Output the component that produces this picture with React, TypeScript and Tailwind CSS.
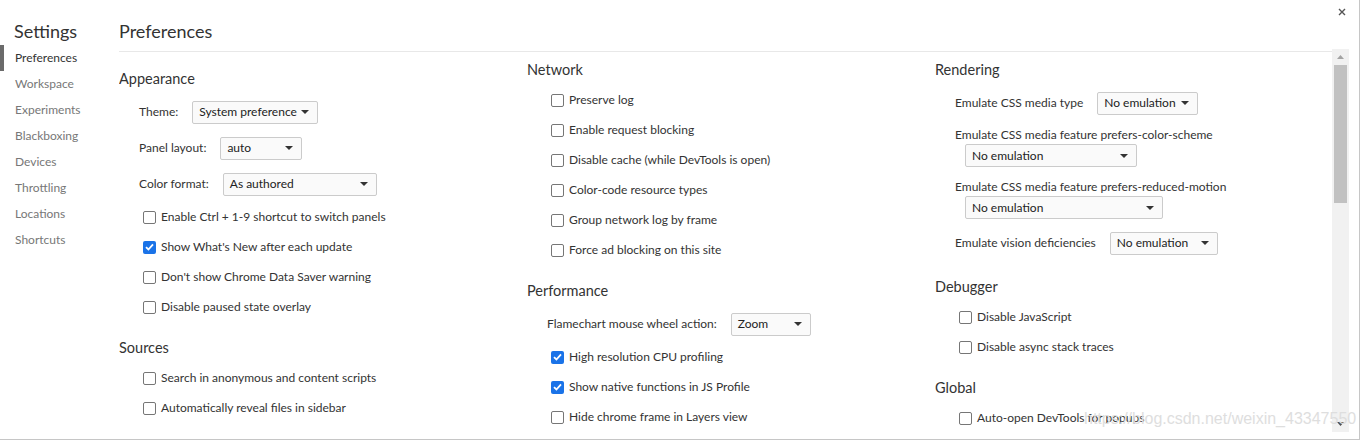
import React from "react";

type Row =
  | { kind: "check"; label: string; checked?: boolean }
  | { kind: "select"; label: string; value: string; width: string }
  | { kind: "stack"; label: string; value: string; width: string };

type Section = { title: string; rows: Row[] };

const columns: { pad: string; sections: Section[] }[] = [
  {
    pad: "pt-[18px]",
    sections: [
      {
        title: "Appearance",
        rows: [
          { kind: "select", label: "Theme:", value: "System preference", width: "w-[126px]" },
          { kind: "select", label: "Panel layout:", value: "auto", width: "w-[82px]" },
          { kind: "select", label: "Color format:", value: "As authored", width: "w-[154px]" },
          { kind: "check", label: "Enable Ctrl + 1-9 shortcut to switch panels" },
          { kind: "check", label: "Show What's New after each update", checked: true },
          { kind: "check", label: "Don't show Chrome Data Saver warning" },
          { kind: "check", label: "Disable paused state overlay" },
        ],
      },
      {
        title: "Sources",
        rows: [
          { kind: "check", label: "Search in anonymous and content scripts" },
          { kind: "check", label: "Automatically reveal files in sidebar" },
        ],
      },
    ],
  },
  {
    pad: "pt-[9px]",
    sections: [
      {
        title: "Network",
        rows: [
          { kind: "check", label: "Preserve log" },
          { kind: "check", label: "Enable request blocking" },
          { kind: "check", label: "Disable cache (while DevTools is open)" },
          { kind: "check", label: "Color-code resource types" },
          { kind: "check", label: "Group network log by frame" },
          { kind: "check", label: "Force ad blocking on this site" },
        ],
      },
      {
        title: "Performance",
        rows: [
          { kind: "select", label: "Flamechart mouse wheel action:", value: "Zoom", width: "w-[80px]" },
          { kind: "check", label: "High resolution CPU profiling", checked: true },
          { kind: "check", label: "Show native functions in JS Profile", checked: true },
          { kind: "check", label: "Hide chrome frame in Layers view" },
        ],
      },
    ],
  },
  {
    pad: "pt-[9px]",
    sections: [
      {
        title: "Rendering",
        rows: [
          { kind: "select", label: "Emulate CSS media type", value: "No emulation", width: "w-[101px]" },
          { kind: "stack", label: "Emulate CSS media feature prefers-color-scheme", value: "No emulation", width: "w-[172px]" },
          { kind: "stack", label: "Emulate CSS media feature prefers-reduced-motion", value: "No emulation", width: "w-[198px]" },
          { kind: "select", label: "Emulate vision deficiencies", value: "No emulation", width: "w-[108px]" },
        ],
      },
      {
        title: "Debugger",
        rows: [
          { kind: "check", label: "Disable JavaScript" },
          { kind: "check", label: "Disable async stack traces" },
        ],
      },
      {
        title: "Global",
        rows: [{ kind: "check", label: "Auto-open DevTools for popups" }],
      },
    ],
  },
];

const nav = ["Preferences", "Workspace", "Experiments", "Blackboxing", "Devices", "Throttling", "Locations", "Shortcuts"];

function Caret() {
  return (
    <svg width="8" height="4" viewBox="0 0 8 4" className="shrink-0">
      <path d="M0 0h8L4 4z" fill="#333" />
    </svg>
  );
}

function Select({ value, width }: { value: string; width: string }) {
  return (
    <div
      className={`${width} h-[23px] flex items-center justify-between pl-[6px] pr-[8px] border border-[#cbcbcb] rounded-[2px] bg-[#fafafa] text-[#222]`}
    >
      <span>{value}</span>
      <Caret />
    </div>
  );
}

function Checkbox({ checked }: { checked?: boolean }) {
  if (checked) {
    return (
      <div className="w-[13px] h-[13px] rounded-[2px] bg-[#1a73e8] flex items-center justify-center shrink-0">
        <svg width="9" height="8" viewBox="0 0 9 8">
          <path d="M1 4.2 3.4 6.5 8 1.3" fill="none" stroke="#fff" strokeWidth="1.8" />
        </svg>
      </div>
    );
  }
  return <div className="w-[13px] h-[13px] rounded-[2px] border border-[#767676] bg-white shrink-0" />;
}

function SettingRow({ row }: { row: Row }) {
  if (row.kind === "check") {
    return (
      <div className="h-[30px] flex items-center pl-[24px] gap-[5px]">
        <Checkbox checked={row.checked} />
        <span>{row.label}</span>
      </div>
    );
  }
  if (row.kind === "select") {
    return (
      <div className="h-[36px] flex items-center pl-[20px] gap-[14px]">
        <span>{row.label}</span>
        <Select value={row.value} width={row.width} />
      </div>
    );
  }
  return (
    <div className="h-[52px] flex flex-col pl-[20px] pt-[5px]">
      <span className="leading-[18px]">{row.label}</span>
      <div className="pl-[10px]">
        <Select value={row.value} width={row.width} />
      </div>
    </div>
  );
}

export default function App() {
  return (
    <div className="w-full h-[441px] bg-white overflow-hidden relative font-[Lato,'Liberation_Sans',sans-serif] text-[12px] text-[#333]">
      <div className="w-[1360px] h-[440px] flex border-r border-b border-[#c6c6c6] bg-white">
        {/* sidebar */}
        <div className="w-[119px] shrink-0 flex flex-col">
          <div className="h-[45px] pl-[14px] pt-[19px] text-[18px] leading-[24px] text-[#333]">Settings</div>
          {nav.map((n, i) => (
            <div key={n} className="h-[26px] flex items-center">
              <div className={`w-[4px] h-full ${i === 0 ? "bg-[#6b6b6b]" : ""}`} />
              <span className={`pl-[11px] text-[12px] ${i === 0 ? "text-[#333]" : "text-[#777]"}`}>{n}</span>
            </div>
          ))}
        </div>

        {/* main */}
        <div className="flex-1 flex flex-col min-w-0">
          <div className="h-[52px] shrink-0 border-b border-[#e8e8e8] pt-[19px] text-[18px] leading-[24px] text-[#333]">
            Preferences
          </div>
          <div className="flex-1 overflow-hidden flex">
            {columns.map((col, ci) => (
              <div key={ci} className={`w-[408px] shrink-0 flex flex-col ${col.pad}`}>
                {col.sections.map((s, si) => (
                  <div key={s.title} className={`flex flex-col ${si > 0 ? "mt-[17px]" : ""}`}>
                    <div className="h-[18px] leading-[18px] text-[14.5px] text-[#333] mb-[6px]">{s.title}</div>
                    {s.rows.map((r) => (
                      <SettingRow key={r.label} row={r} />
                    ))}
                  </div>
                ))}
              </div>
            ))}
          </div>
          <div className="h-[7px] shrink-0" />
        </div>

        {/* close + scrollbar */}
        <div className="w-[27px] shrink-0 flex flex-col">
          <div className="h-[49px] shrink-0 flex pt-[8px] pl-[6px]">
            <svg width="8" height="8" viewBox="0 0 8 8">
              <path d="M1 1l6 6M7 1L1 7" stroke="#555" strokeWidth="1.4" />
            </svg>
          </div>
          <div className="w-[17px] flex-1 mb-[7px] bg-[#f1f1f1] flex flex-col items-center">
            <svg width="7" height="4" viewBox="0 0 7 4" className="mt-[6px]">
              <path d="M0 4h7L3.5 0z" fill="#a3a3a3" />
            </svg>
            <div className="w-[13px] h-[138px] mt-[6px] bg-[#c1c1c1]" />
            <div className="flex-1" />
            <svg width="7" height="4" viewBox="0 0 7 4" className="mb-[6px]">
              <path d="M0 0h7L3.5 4z" fill="#505050" />
            </svg>
          </div>
        </div>
      </div>

      <div className="absolute left-[1084px] top-[407px] text-[16px] text-[#dedede] font-[Arial,'Liberation_Sans',sans-serif] pointer-events-none">
        https://blog.csdn.net/weixin_43347550
      </div>
    </div>
  );
}
